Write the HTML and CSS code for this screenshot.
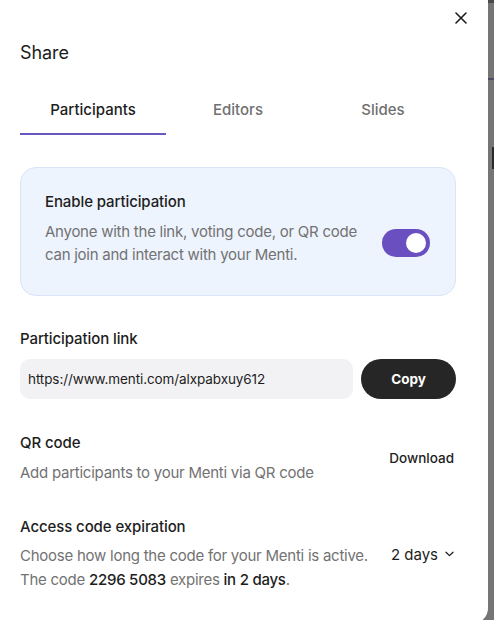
FILE: index.html
```html
<!DOCTYPE html>
<html lang="en">
<head>
<meta charset="utf-8">
<title>Share</title>
<link rel="stylesheet" href="styles.css">
</head>
<body>
<div class="page">
  <section class="panel">
    <div class="close-row">
      <button class="close" aria-label="Close">
        <svg width="12" height="12" viewBox="0 0 12 12"><path d="M1 1L11 11M11 1L1 11" stroke="#1d1d1d" stroke-width="1.6" stroke-linecap="round"/></svg>
      </button>
    </div>
    <h1 class="title">Share</h1>
    <nav class="tabs">
      <div class="tab active">Participants</div>
      <div class="tab">Editors</div>
      <div class="tab">Slides</div>
    </nav>

    <div class="card">
      <div class="card-title">Enable participation</div>
      <div class="card-row">
        <p class="desc card-desc">Anyone with the link, voting code, or QR code can join and interact with your Menti.</p>
        <div class="toggle"><span class="knob"></span></div>
      </div>
    </div>

    <div class="section link-section">
      <div class="label">Participation link</div>
      <div class="link-row">
        <div class="link-input">https://www.menti.com/alxpabxuy612</div>
        <button class="copy">Copy</button>
      </div>
    </div>

    <div class="section row-section qr">
      <div class="row-text">
        <div class="label">QR code</div>
        <p class="desc">Add participants to your Menti via QR code</p>
      </div>
      <button class="text-btn">Download</button>
    </div>

    <div class="section row-section access">
      <div class="row-text">
        <div class="label">Access code expiration</div>
        <p class="desc tall">Choose how long the code for your Menti is active.<br>The code <strong>2296 5083</strong> expires <strong>in 2 days</strong>.</p>
      </div>
      <button class="select">2 days
        <svg width="9" height="6" viewBox="0 0 9 6"><path d="M1 1.2L4.5 4.6L8 1.2" fill="none" stroke="#1d1d1d" stroke-width="1.3" stroke-linecap="round" stroke-linejoin="round"/></svg>
      </button>
    </div>
  </section>
  <aside class="backdrop">
    <span class="bd-top"></span>
    <span class="bd-line"></span>
    <span class="bd-block"></span>
  </aside>
</div>
</body>
</html>
```

FILE: styles.css
```css
* { box-sizing: border-box; }
html, body { margin: 0; padding: 0; }
body {
  background: #757575;
  font-family: Inter, "Noto Sans", sans-serif;
  color: #1d1d1d;
  overflow: hidden;
}
.page {
  display: flex;
  width: 494px;
  height: 620px;
}
.panel {
  width: 488px;
  height: 624px;
  flex: none;
  background: #fff;
  border-bottom-right-radius: 16px;
  padding: 12px 32px 0 20px;
}
.close-row {
  display: flex;
  justify-content: flex-end;
  margin-right: -11px;
}
.close {
  border: 0;
  background: none;
  padding: 0;
  width: 12px;
  height: 12px;
  display: flex;
  cursor: pointer;
}
.title {
  margin: 17px 0 0;
  font-size: 18px;
  font-weight: 400;
  line-height: 24px;
  letter-spacing: -0.1px;
}
.tabs {
  display: grid;
  grid-template-columns: 146px 1fr 146px;
  margin-top: 35px;
}
.tab {
  text-align: center;
  font-size: 15px;
  font-weight: 500;
  line-height: 20px;
  color: #707070;
  padding-bottom: 13px;
  border-bottom: 2px solid transparent;
}
.tab.active {
  color: #1d1d1d;
  border-bottom-color: #6a56c0;
}
.card {
  margin-top: 32px;
  background: #eef4fe;
  border: 1px solid #d9e4f6;
  border-radius: 16px;
  padding: 23px 24px 29px 24px;
}
.card-title, .label {
  font-size: 15px;
  font-weight: 500;
  line-height: 22px;
  letter-spacing: -0.1px;
}
.card-row {
  display: flex;
  align-items: center;
  justify-content: space-between;
  margin-top: 7px;
}
.desc {
  margin: 0;
  font-size: 15px;
  line-height: 23px;
  color: #727272;
  letter-spacing: -0.25px;
}
.card-desc { width: 320px; }
.toggle {
  width: 48px;
  height: 28px;
  border-radius: 14px;
  background: #6a4fc0;
  display: flex;
  justify-content: flex-end;
  align-items: center;
  padding: 0 4px;
  margin-right: 1px;
}
.knob {
  width: 20px;
  height: 20px;
  border-radius: 50%;
  background: #fff;
}
.section { margin-top: 32px; }
.link-row {
  display: flex;
  gap: 8px;
  margin-top: 9px;
}
.link-input {
  flex: 1;
  height: 40px;
  background: #f2f2f4;
  border-radius: 10px;
  padding: 0 8px;
  display: flex;
  align-items: center;
  font-size: 13.5px;
  color: #1d1d1d;
  letter-spacing: -0.1px;
}
.copy {
  width: 95px;
  height: 40px;
  border: 0;
  border-radius: 20px;
  background: #262626;
  color: #fff;
  font-family: inherit;
  font-size: 13.5px;
  font-weight: 700;
  cursor: pointer;
}
.row-section {
  display: flex;
  align-items: center;
  justify-content: space-between;
}
.row-section .desc { margin-top: 7px; }
.row-section .desc.tall { line-height: 24px; margin-top: 6px; }
.desc strong { color: #1d1d1d; font-weight: 500; }
.qr { margin-top: 33px; }
.access { margin-top: 32px; }
.text-btn {
  border: 0;
  background: none;
  padding: 0;
  margin-right: 2px;
  font-family: inherit;
  font-size: 13.5px;
  font-weight: 500;
  color: #1d1d1d;
}
.select {
  display: flex;
  align-items: center;
  gap: 7px;
  border: 0;
  background: none;
  padding: 0;
  margin-right: 2px;
  font-family: inherit;
  font-size: 15px;
  font-weight: 400;
  color: #1d1d1d;
}
.backdrop {
  flex: 1;
  display: flex;
  flex-direction: column;
  align-items: flex-end;
}
.bd-top { width: 100%; height: 3px; background: #4a4a4a; }
.bd-line { width: 100%; height: 2px; background: #4b4a6a; margin-top: 75px; }
.bd-block { width: 2px; height: 22px; background: #2a2a2a; margin-top: 67px; }
```
